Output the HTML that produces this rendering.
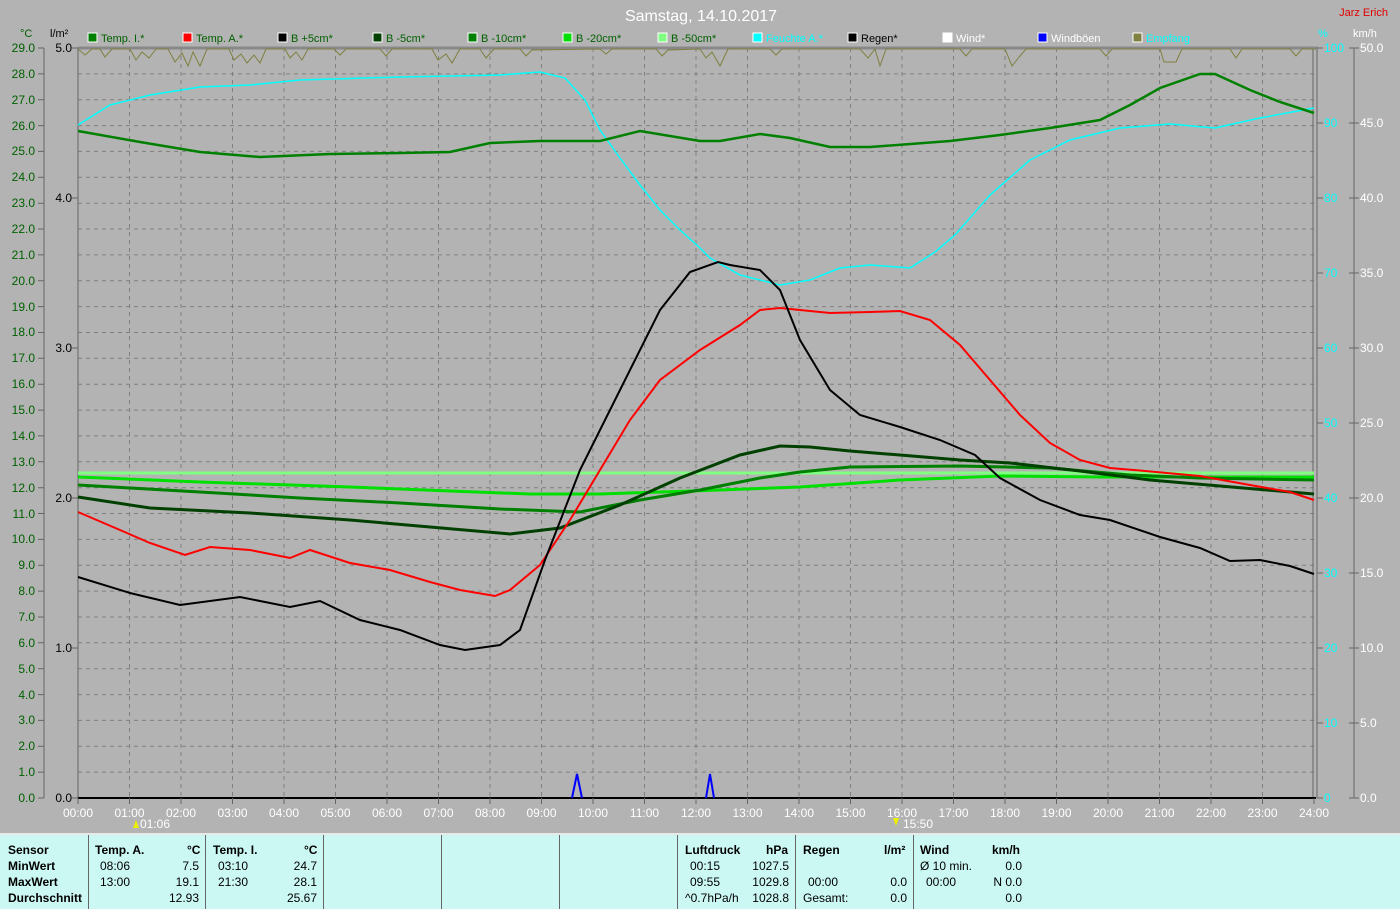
<!DOCTYPE html>
<html><head><meta charset="utf-8"><style>
html,body{margin:0;padding:0;width:1400px;height:907px;overflow:hidden;background:#b3b3b3;font-family:"Liberation Sans",sans-serif}
svg{position:absolute;left:0;top:0}
#tbl{position:absolute;left:0;top:833px;width:1400px;height:74px;background:#ccf8f4;border-top:2px solid #e8e8e8;font-size:12px;color:#000}
.c{position:absolute;top:0;height:74px;border-left:1px solid #666}
.t{position:absolute;white-space:nowrap}
.b{font-weight:bold}
</style></head><body>
<svg width="1400" height="833" font-family="Liberation Sans, sans-serif" font-size="12">
<text x="701" y="21" fill="#fff" font-size="16" text-anchor="middle">Samstag, 14.10.2017</text>
<text x="1388" y="16" fill="#e00000" font-size="11" text-anchor="end">Jarz Erich</text>
<g font-size="11">
<rect x="88" y="33" width="9" height="9" fill="#008000" stroke="#fff"/><text x="101" y="42" fill="#006000">Temp. I.*</text>
<rect x="183" y="33" width="9" height="9" fill="#f00" stroke="#fff"/><text x="196" y="42" fill="#006000">Temp. A.*</text>
<rect x="278" y="33" width="9" height="9" fill="#000" stroke="#fff"/><text x="291" y="42" fill="#006000">B +5cm*</text>
<rect x="373" y="33" width="9" height="9" fill="#004000" stroke="#fff"/><text x="386" y="42" fill="#006000">B -5cm*</text>
<rect x="468" y="33" width="9" height="9" fill="#008000" stroke="#fff"/><text x="481" y="42" fill="#006000">B -10cm*</text>
<rect x="563" y="33" width="9" height="9" fill="#00e000" stroke="#fff"/><text x="576" y="42" fill="#006000">B -20cm*</text>
<rect x="658" y="33" width="9" height="9" fill="#80ff80" stroke="#fff"/><text x="671" y="42" fill="#006000">B -50cm*</text>
<rect x="753" y="33" width="9" height="9" fill="#0ff" stroke="#fff"/><text x="766" y="42" fill="#0ff">Feuchte A.*</text>
<rect x="848" y="33" width="9" height="9" fill="#000" stroke="#fff"/><text x="861" y="42" fill="#000">Regen*</text>
<rect x="943" y="33" width="9" height="9" fill="#fff" stroke="#fff"/><text x="956" y="42" fill="#fff">Wind*</text>
<rect x="1038" y="33" width="9" height="9" fill="#00f" stroke="#fff"/><text x="1051" y="42" fill="#fff">Windböen</text>
<rect x="1133" y="33" width="9" height="9" fill="#808040" stroke="#fff"/><text x="1146" y="42" fill="#0ff">Empfang</text>
</g>
<text x="20" y="37" fill="#006000" font-size="11">°C</text>
<text x="50" y="37" fill="#000" font-size="11">l/m²</text>
<text x="1318" y="37" fill="#0ff" font-size="11">%</text>
<text x="1353" y="37" fill="#fff" font-size="11">km/h</text>
<path stroke="#808080" stroke-dasharray="4,4" fill="none" d="M78 73.9H1314M78 99.7H1314M78 125.6H1314M78 151.4H1314M78 177.3H1314M78 203.2H1314M78 229H1314M78 254.9H1314M78 280.8H1314M78 306.6H1314M78 332.5H1314M78 358.3H1314M78 384.2H1314M78 410.1H1314M78 435.9H1314M78 461.8H1314M78 487.7H1314M78 513.5H1314M78 539.4H1314M78 565.2H1314M78 591.1H1314M78 617H1314M78 642.8H1314M78 668.7H1314M78 694.6H1314M78 720.4H1314M78 746.3H1314M78 772.1H1314
M129.5 48V798M181 48V798M232.5 48V798M284 48V798M335.5 48V798M387 48V798M438.5 48V798M490 48V798M541.5 48V798M593 48V798M644.5 48V798M696 48V798M747.5 48V798M799 48V798M850.5 48V798M902 48V798M953.5 48V798M1005 48V798M1056.5 48V798M1108 48V798M1159.5 48V798M1211 48V798M1262.5 48V798"/>
<path stroke="#666" stroke-width="1" fill="none" d="M78 48V798M1313 48V798M1317 48V798M1354 48V798M44 48V798"/>
<path stroke="#888" stroke-width="3" fill="none" d="M78 48H1318"/>
<path stroke="#000" stroke-width="2" fill="none" d="M78 798H1316"/>
<path stroke="#666" fill="none" d="M38 48h6M38 73.9h6M38 99.7h6M38 125.6h6M38 151.4h6M38 177.3h6M38 203.2h6M38 229h6M38 254.9h6M38 280.8h6M38 306.6h6M38 332.5h6M38 358.3h6M38 384.2h6M38 410.1h6M38 435.9h6M38 461.8h6M38 487.7h6M38 513.5h6M38 539.4h6M38 565.2h6M38 591.1h6M38 617h6M38 642.8h6M38 668.7h6M38 694.6h6M38 720.4h6M38 746.3h6M38 772.1h6M38 798h6
M72 48h6M72 198h6M72 348h6M72 498h6M72 648h6M72 798h6M1317 48h6M1317 123h6M1317 198h6M1317 273h6M1317 348h6M1317 423h6M1317 498h6M1317 573h6M1317 648h6M1317 723h6M1317 798h6M1349 48h10M1349 123h10M1349 198h10M1349 273h10M1349 348h10M1349 423h10M1349 498h10M1349 573h10M1349 648h10M1349 723h10M1349 798h10
M78 798v6M129.5 798v6M181 798v6M232.5 798v6M284 798v6M335.5 798v6M387 798v6M438.5 798v6M490 798v6M541.5 798v6M593 798v6M644.5 798v6M696 798v6M747.5 798v6M799 798v6M850.5 798v6M902 798v6M953.5 798v6M1005 798v6M1056.5 798v6M1108 798v6M1159.5 798v6M1211 798v6M1262.5 798v6M1314 798v6"/>
<g fill="#006000" text-anchor="end">
<text x="35" y="52">29.0</text><text x="35" y="78">28.0</text><text x="35" y="104">27.0</text><text x="35" y="130">26.0</text><text x="35" y="155">25.0</text><text x="35" y="181">24.0</text><text x="35" y="207">23.0</text><text x="35" y="233">22.0</text><text x="35" y="259">21.0</text><text x="35" y="285">20.0</text><text x="35" y="311">19.0</text><text x="35" y="336">18.0</text><text x="35" y="362">17.0</text><text x="35" y="388">16.0</text><text x="35" y="414">15.0</text><text x="35" y="440">14.0</text><text x="35" y="466">13.0</text><text x="35" y="492">12.0</text><text x="35" y="518">11.0</text><text x="35" y="543">10.0</text><text x="35" y="569">9.0</text><text x="35" y="595">8.0</text><text x="35" y="621">7.0</text><text x="35" y="647">6.0</text><text x="35" y="673">5.0</text><text x="35" y="699">4.0</text><text x="35" y="724">3.0</text><text x="35" y="750">2.0</text><text x="35" y="776">1.0</text><text x="35" y="802">0.0</text>
</g>
<g fill="#000" text-anchor="end"><text x="72" y="52">5.0</text><text x="72" y="202">4.0</text><text x="72" y="352">3.0</text><text x="72" y="502">2.0</text><text x="72" y="652">1.0</text><text x="72" y="802">0.0</text></g>
<g fill="#0ff"><text x="1324" y="52">100</text><text x="1324" y="127">90</text><text x="1324" y="202">80</text><text x="1324" y="277">70</text><text x="1324" y="352">60</text><text x="1324" y="427">50</text><text x="1324" y="502">40</text><text x="1324" y="577">30</text><text x="1324" y="652">20</text><text x="1324" y="727">10</text><text x="1324" y="802">0</text></g>
<g fill="#fff"><text x="1360" y="52">50.0</text><text x="1360" y="127">45.0</text><text x="1360" y="202">40.0</text><text x="1360" y="277">35.0</text><text x="1360" y="352">30.0</text><text x="1360" y="427">25.0</text><text x="1360" y="502">20.0</text><text x="1360" y="577">15.0</text><text x="1360" y="652">10.0</text><text x="1360" y="727">5.0</text><text x="1360" y="802">0.0</text></g>
<g fill="#fff" text-anchor="middle"><text x="78" y="817">00:00</text><text x="129.5" y="817">01:00</text><text x="181" y="817">02:00</text><text x="232.5" y="817">03:00</text><text x="284" y="817">04:00</text><text x="335.5" y="817">05:00</text><text x="387" y="817">06:00</text><text x="438.5" y="817">07:00</text><text x="490" y="817">08:00</text><text x="541.5" y="817">09:00</text><text x="593" y="817">10:00</text><text x="644.5" y="817">11:00</text><text x="696" y="817">12:00</text><text x="747.5" y="817">13:00</text><text x="799" y="817">14:00</text><text x="850.5" y="817">15:00</text><text x="902" y="817">16:00</text><text x="953.5" y="817">17:00</text><text x="1005" y="817">18:00</text><text x="1056.5" y="817">19:00</text><text x="1108" y="817">20:00</text><text x="1159.5" y="817">21:00</text><text x="1211" y="817">22:00</text><text x="1262.5" y="817">23:00</text><text x="1314" y="817">24:00</text></g>
<text x="140" y="828" fill="#fff">01:06</text><path d="M133 828l3-8 3 8z" fill="#ee0"/>
<text x="903" y="828" fill="#fff">15:50</text><path d="M893 818l3 8 3-8z" fill="#ee0"/>
<path fill="none" stroke="#808040" d="M78 49L85 55L92 49L100 49L105 57L112 49L130 49L136 60L142 52L149 58L156 49L168 49L175 62L182 53L188 66L193 52L200 66L207 49L229 49L234 60L241 54L247 63L254 55L260 63L266 49L285 49L290 58L296 52L302 60L308 49L334 49L340 55L346 49L380 49L386 56L392 49L432 49L438 60L446 54L452 63L460 49L480 49L486 58L494 49L520 49L526 56L532 50L600 49L606 54L612 49L656 49L662 56L668 50L700 49L706 58L712 52L720 66L728 49L770 49L776 55L782 49L860 49L868 58L875 49L880 66L886 49L960 49L966 56L972 49L1005 49L1012 66L1020 56L1026 49L1100 49L1106 56L1112 49L1160 49L1164 62L1176 62L1182 49L1230 49L1236 58L1242 49L1290 49L1296 56L1302 49L1316 49"/>
<path fill="none" stroke="#0ff" stroke-width="1.5" d="M78 125L110 105L150 95L200 87L250 85L300 80L400 77L500 75L540 72L565 78L585 100L600 130L620 158L640 185L660 210L680 230L700 248L710 258L740 275L780 285L810 280L840 268L870 265L910 268L935 252L955 235L990 195L1030 160L1070 140L1120 128L1170 124L1215 128L1260 118L1314 108"/>
<path fill="none" stroke="#80ff80" stroke-width="3" d="M78 473L1314 473"/>
<path fill="none" stroke="#00e000" stroke-width="3" d="M78 477L200 482L350 487L450 491L530 494L600 494L720 490L800 487L900 480L1000 476L1100 477L1314 477"/>
<path fill="none" stroke="#008000" stroke-width="3" d="M78 485L200 492L300 498L400 503L500 509L580 512L640 500L700 490L760 478L800 472L850 467L960 466L1050 468L1130 475L1200 478L1314 480"/>
<path fill="none" stroke="#004000" stroke-width="3" d="M78 497L150 508L250 513L350 520L430 527L510 534L560 528L620 505L680 478L740 455L780 446L810 447L850 451L900 455L960 460L1010 463L1080 471L1150 480L1220 486L1314 494"/>
<path fill="none" stroke="#008000" stroke-width="2.5" d="M78 131L140 142L200 152L260 157L330 154L400 153L450 152L490 143L540 141L600 141L640 131L700 141L720 141L760 134L790 138L830 147L870 147L950 141L1000 135L1050 128L1100 120L1130 105L1160 88L1200 74L1215 74L1250 90L1280 102L1314 113"/>
<path fill="none" stroke="#f00" stroke-width="2" d="M78 512L120 530L150 543L185 555L210 547L250 550L290 558L310 550L350 563L390 570L430 582L460 590L495 596L510 590L540 565L570 520L600 470L630 420L660 380L700 350L740 325L760 310L780 308L830 313L870 312L900 311L930 320L960 345L990 380L1020 415L1050 443L1080 460L1110 468L1145 471L1200 476L1250 485L1290 492L1314 500"/>
<path fill="none" stroke="#000" stroke-width="2" d="M78 577L130 593L180 605L240 597L290 607L320 601L360 620L400 630L440 645L465 650L500 645L520 630L545 560L580 470L620 390L660 310L690 272L718 262L730 265L760 270L780 290L800 340L830 390L860 415L900 427L940 440L975 455L1000 478L1040 500L1080 515L1110 520L1160 537L1200 548L1230 561L1260 560L1290 566L1314 574"/>
<path fill="none" stroke="#00f" stroke-width="2" d="M572 798L577 774L582 798M706 798L710 774L714 798"/>
</svg>
<div id="tbl">
<div class="c" style="left:88px"></div><div class="c" style="left:205px"></div><div class="c" style="left:323px"></div><div class="c" style="left:441px"></div><div class="c" style="left:559px"></div><div class="c" style="left:677px"></div><div class="c" style="left:795px"></div><div class="c" style="left:913px"></div>
<div class="t b" style="left:8px;top:8px">Sensor</div><div class="t b" style="left:8px;top:24px">MinWert</div><div class="t b" style="left:8px;top:40px">MaxWert</div><div class="t b" style="left:8px;top:56px">Durchschnitt</div>
<div class="t b" style="left:95px;top:8px">Temp. A.</div><div class="t b" style="left:187px;top:8px">°C</div>
<div class="t" style="left:100px;top:24px">08:06</div><div class="t" style="right:1201px;top:24px">7.5</div>
<div class="t" style="left:100px;top:40px">13:00</div><div class="t" style="right:1201px;top:40px">19.1</div>
<div class="t" style="right:1201px;top:56px">12.93</div>
<div class="t b" style="left:213px;top:8px">Temp. I.</div><div class="t b" style="left:304px;top:8px">°C</div>
<div class="t" style="left:218px;top:24px">03:10</div><div class="t" style="right:1083px;top:24px">24.7</div>
<div class="t" style="left:218px;top:40px">21:30</div><div class="t" style="right:1083px;top:40px">28.1</div>
<div class="t" style="right:1083px;top:56px">25.67</div>
<div class="t b" style="left:685px;top:8px">Luftdruck</div><div class="t b" style="left:766px;top:8px">hPa</div>
<div class="t" style="left:690px;top:24px">00:15</div><div class="t" style="right:611px;top:24px">1027.5</div>
<div class="t" style="left:690px;top:40px">09:55</div><div class="t" style="right:611px;top:40px">1029.8</div>
<div class="t" style="left:685px;top:56px">^0.7hPa/h</div><div class="t" style="right:611px;top:56px">1028.8</div>
<div class="t b" style="left:803px;top:8px">Regen</div><div class="t b" style="left:884px;top:8px">l/m²</div>
<div class="t" style="left:808px;top:40px">00:00</div><div class="t" style="right:493px;top:40px">0.0</div>
<div class="t" style="left:803px;top:56px">Gesamt:</div><div class="t" style="right:493px;top:56px">0.0</div>
<div class="t b" style="left:920px;top:8px">Wind</div><div class="t b" style="left:992px;top:8px">km/h</div>
<div class="t" style="left:920px;top:24px">Ø 10 min.</div><div class="t" style="right:378px;top:24px">0.0</div>
<div class="t" style="left:926px;top:40px">00:00</div><div class="t" style="right:378px;top:40px">N 0.0</div>
<div class="t" style="right:378px;top:56px">0.0</div>
</div>
</body></html>
